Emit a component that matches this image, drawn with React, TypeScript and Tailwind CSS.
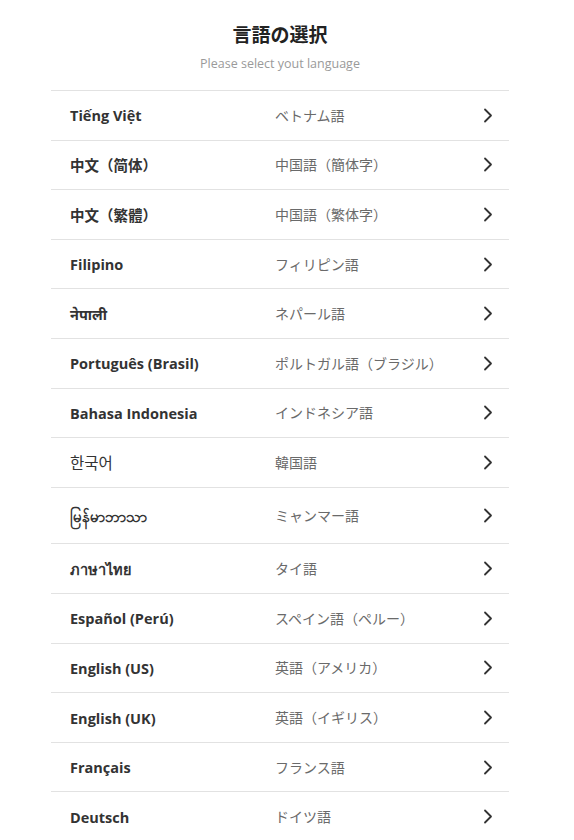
import React from 'react';

interface Lang {
  native: string;
  ja: string;
  tall?: boolean;
  bold?: boolean;
  size?: string;
}

// 言語一覧
const languages: Lang[] = [
  { native: 'Tiếng Việt', ja: 'ベトナム語', bold: true },
  { native: '中文（简体）', ja: '中国語（簡体字）', bold: true },
  { native: '中文（繁體）', ja: '中国語（繁体字）', bold: true },
  { native: 'Filipino', ja: 'フィリピン語', bold: true },
  { native: 'नेपाली', ja: 'ネパール語', bold: true },
  { native: 'Português (Brasil)', ja: 'ポルトガル語（ブラジル）', bold: true },
  { native: 'Bahasa Indonesia', ja: 'インドネシア語', bold: true },
  { native: '한국어', ja: '韓国語', size: 'text-[15.5px]' },
  { native: 'မြန်မာဘာသာ', ja: 'ミャンマー語', tall: true, bold: true, size: 'text-[15px]' },
  { native: 'ภาษาไทย', ja: 'タイ語', bold: true },
  { native: 'Español (Perú)', ja: 'スペイン語（ペルー）', bold: true },
  { native: 'English (US)', ja: '英語（アメリカ）', bold: true },
  { native: 'English (UK)', ja: '英語（イギリス）', bold: true },
  { native: 'Français', ja: 'フランス語', bold: true },
  { native: 'Deutsch', ja: 'ドイツ語', bold: true },
];

const Chevron = () => (
  <svg width="10" height="15" viewBox="0 0 10 15" fill="none" className="shrink-0">
    <path d="M2 1.5 L8 7.5 L2 13.5" stroke="#333" strokeWidth="1.8" strokeLinecap="round" strokeLinejoin="round" />
  </svg>
);

const LanguageRow: React.FC<{ lang: Lang }> = ({ lang }) => (
  <div
    className={`flex items-center border-b border-[#e2e2e2] pl-[19px] pr-[16px] ${
      lang.tall ? 'h-[56.6px]' : 'h-[49.6px]'
    }`}
  >
    <div
      className={`w-[205px] pt-[2px] ${lang.size ?? 'text-[14.5px]'} text-[#333] ${
        lang.bold ? 'font-bold' : 'font-normal'
      }`}
    >
      {lang.native}
    </div>
    <div className="flex-1 text-[14px] text-[#6a6a6a]">{lang.ja}</div>
    <Chevron />
  </div>
);

export default function App() {
  return (
    <div
      className="min-h-[840px] w-[560px] bg-white"
      style={{ fontFamily: '"Open Sans", "Noto Sans", "Noto Sans CJK JP", sans-serif' }}
    >
      <div className="flex flex-col items-center pt-[23px]">
        <h1 className="text-[19px] font-bold text-[#222] leading-[24px]">言語の選択</h1>
        <p className="mt-[9px] text-[12.5px] text-[#9a9a9a] leading-[16px]">Please select yout language</p>
      </div>
      <div className="mx-[51px] mt-[18px] border-t border-[#e2e2e2] w-[458px]">
        {languages.map((lang, i) => (
          <LanguageRow key={i} lang={lang} />
        ))}
      </div>
    </div>
  );
}
